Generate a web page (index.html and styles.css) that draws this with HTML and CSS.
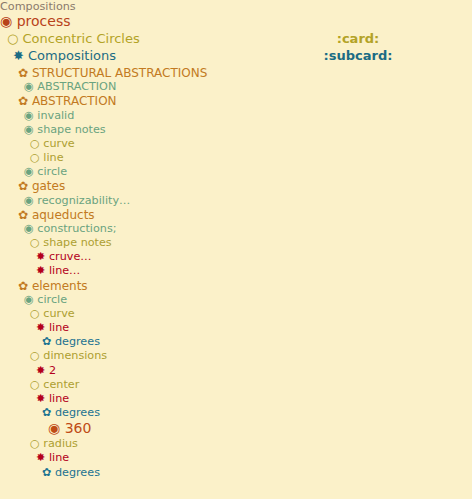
FILE: index.html
```html
<!DOCTYPE html>
<html>
<head>
<meta charset="utf-8">
<link rel="stylesheet" href="styles.css">
</head>
<body>
<div class="page">
  <div class="header">Compositions</div>
  <div class="row l0 process"><span class="g">◉</span> process</div>
  <div class="row split l1 card"><span class="label"><span class="g">○</span> Concentric Circles</span><span class="tag">:card:</span></div>
  <div class="row split l2 subcard"><span class="label"><span class="g">✸</span> Compositions</span><span class="tag">:subcard:</span></div>
  <div class="row l3 or"><span class="g">✿</span> STRUCTURAL ABSTRACTIONS</div>
  <div class="row l4 gr"><span class="g">◉</span> ABSTRACTION</div>
  <div class="row l3 or"><span class="g">✿</span> ABSTRACTION</div>
  <div class="row l4 gr"><span class="g">◉</span> invalid</div>
  <div class="row l4 gr"><span class="g">◉</span> shape notes</div>
  <div class="row l5 ol"><span class="g">○</span> curve</div>
  <div class="row l5 ol"><span class="g">○</span> line</div>
  <div class="row l4 gr"><span class="g">◉</span> circle</div>
  <div class="row l3 or"><span class="g">✿</span> gates</div>
  <div class="row l4 gr"><span class="g">◉</span> recognizability…</div>
  <div class="row l3 or"><span class="g">✿</span> aqueducts</div>
  <div class="row l4 gr"><span class="g">◉</span> constructions;</div>
  <div class="row l5 ol"><span class="g">○</span> shape notes</div>
  <div class="row l6 rd"><span class="g">✸</span> cruve…</div>
  <div class="row l6 rd"><span class="g">✸</span> line…</div>
  <div class="row l3 or"><span class="g">✿</span> elements</div>
  <div class="row l4 gr"><span class="g">◉</span> circle</div>
  <div class="row l5 ol"><span class="g">○</span> curve</div>
  <div class="row l6 rd"><span class="g">✸</span> line</div>
  <div class="row l7 tl"><span class="g">✿</span> degrees</div>
  <div class="row l5 ol"><span class="g">○</span> dimensions</div>
  <div class="row l6 rd"><span class="g">✸</span> 2</div>
  <div class="row l5 ol"><span class="g">○</span> center</div>
  <div class="row l6 rd"><span class="g">✸</span> line</div>
  <div class="row l7 tl"><span class="g">✿</span> degrees</div>
  <div class="row l8 big"><span class="g">◉</span> 360</div>
  <div class="row l5 ol"><span class="g">○</span> radius</div>
  <div class="row l6 rd"><span class="g">✸</span> line</div>
  <div class="row l7 tl"><span class="g">✿</span> degrees</div>
</div>
</body>
</html>
```
FILE: styles.css
```css
html, body {
  margin: 0;
  padding: 0;
  background: #fbf1c9;
}
body {
  font-family: "DejaVu Sans", sans-serif;
  width: 472px;
  height: 499px;
  overflow: hidden;
}
.page {
  width: 408px;
}
.header {
  font-size: 11.2px;
  line-height: 13px;
  color: #8a7a6c;
}
.row {
  white-space: nowrap;
  font-size: 11.2px;
  line-height: 14.17px;
}
.split {
  display: flex;
  align-items: baseline;
}
.label { flex: 1; }
.tag {
  width: 100px;
  text-align: center;
  font-weight: bold;
}
.l0 { padding-left: 0; }
.l1 { padding-left: 7px; }
.l2 { padding-left: 13px; }
.l3 { padding-left: 18px; }
.l4 { padding-left: 24px; }
.l5 { padding-left: 30px; }
.l6 { padding-left: 36px; }
.l7 { padding-left: 42px; }
.l8 { padding-left: 48px; }

.process { font-size: 14px; line-height: 17px; color: #b8421a; }
.card { font-size: 13px; line-height: 17px; color: #b3a327; }
.subcard { font-size: 13px; line-height: 17px; padding-bottom: 2px; color: #1c6c84; }
.or { font-size: 12px; color: #c27a22; }
.gr { color: #6aa37f; }
.ol { color: #ad9f31; }
.rd { color: #b3001c; }
.tl { color: #1b7391; }
.big { font-size: 14px; line-height: 17px; color: #bf4c16; }
.g { font-size: 1em; line-height: 0; }
```
